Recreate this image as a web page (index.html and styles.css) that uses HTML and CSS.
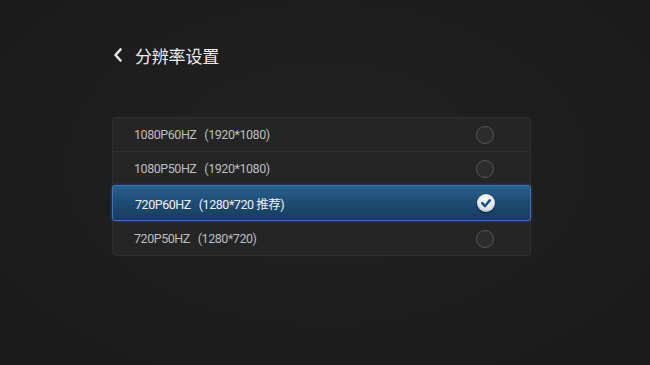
FILE: index.html
```html
<!DOCTYPE html>
<html lang="zh-CN">
<head>
<meta charset="utf-8">
<link rel="stylesheet" href="styles.css">
</head>
<body>
<div class="screen">
  <header class="title-bar">
    <svg class="back" width="10" height="14" viewBox="0 0 10 14"><path d="M7.5 1.5 L2.5 7 L7.5 12.5" fill="none" stroke="#e6e6e6" stroke-width="2.6" stroke-linecap="round" stroke-linejoin="round"/></svg>
    <h1 class="title">分辨率设置</h1>
  </header>
  <ul class="list">
    <li class="row"><span class="label">1080P60HZ&nbsp;&nbsp;&nbsp;(1920*1080)</span><span class="radio"></span></li>
    <li class="row"><span class="label">1080P50HZ&nbsp;&nbsp;&nbsp;(1920*1080)</span><span class="radio"></span></li>
    <li class="row selected"><span class="label">720P60HZ&nbsp;&nbsp;&nbsp;(1280*720 推荐)</span>
      <span class="radio checked"><svg width="18" height="18" viewBox="0 0 18 18"><path d="M5.2 9.2 L8 12 L12.8 6.4" fill="none" stroke="#1d4f8a" stroke-width="2.6" stroke-linecap="round" stroke-linejoin="round"/></svg></span></li>
    <li class="row"><span class="label">720P50HZ&nbsp;&nbsp;&nbsp;(1280*720)</span><span class="radio"></span></li>
  </ul>
</div>
</body>
</html>
```
FILE: styles.css
```css
html, body {
  margin: 0;
  padding: 0;
  width: 650px;
  height: 365px;
  overflow: hidden;
}
body {
  background: radial-gradient(ellipse at 50% 45%, #222222 0%, #1d1d1d 60%, #1a1a1a 100%);
  font-family: Roboto, "Noto Sans CJK SC", sans-serif;
}
.screen {
  padding: 43px 0 0 112px;
}
.title-bar {
  display: flex;
  align-items: center;
  height: 24px;
  margin-bottom: 50px;
}
.back {
  margin-left: 1px;
  margin-right: 12px;
}
.title {
  margin: 0;
  font-family: "Noto Sans CJK SC", sans-serif;
  font-weight: 400;
  font-size: 17px;
  color: #ececec;
  letter-spacing: -0.2px;
}
.list {
  list-style: none;
  margin: 0;
  padding: 0;
  width: 419px;
  background: #252525;
  border: 1px solid #2f2f2f;
  border-radius: 4px;
  box-sizing: border-box;
}
.row {
  display: flex;
  align-items: center;
  justify-content: space-between;
  height: 34px;
  padding: 0 36px 0 21px;
  border-top: 1px solid #303030;
  box-sizing: border-box;
  color: #bdbdbd;
  font-size: 12.5px;
  letter-spacing: -0.45px;
}
.row:first-child {
  border-top: none;
  height: 33px;
}
.row.selected {
  height: 36px;
  margin: 0 -1px;
  border: 1px solid #3b72c4;
  border-radius: 3px;
  background: linear-gradient(to bottom, #27628f 0%, #1e4d75 45%, #173c5d 100%);
  box-shadow: 0 0 3px rgba(60, 120, 210, 0.6);
  color: #eef2f7;
  padding-right: 35px;
  padding-left: 22px;
}
.label {
  white-space: pre;
}
.radio {
  width: 18px;
  height: 18px;
  border-radius: 50%;
  border: 1px solid #575757;
  background: #2c2c2c;
  box-sizing: border-box;
}
.radio.checked {
  border: none;
  background: radial-gradient(circle at 50% 35%, #ffffff 0%, #e4e8ee 55%, #9aa6b4 100%);
  box-shadow: 0 1px 2px rgba(0,0,0,0.5);
  display: flex;
}
```
